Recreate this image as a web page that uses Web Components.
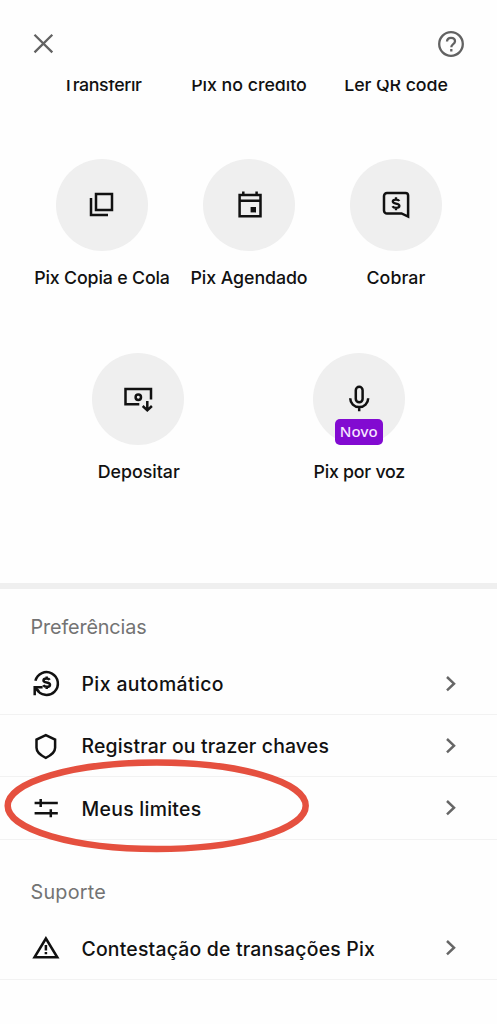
<!DOCTYPE html>
<html lang="pt-BR">
<head>
<meta charset="utf-8">
<meta name="viewport" content="width=device-width, initial-scale=1">
<title>Pix</title>
<style>
html,body{margin:0;padding:0;background:#fefefe}
body{font-family:Inter,"Liberation Sans",sans-serif;color:#111;height:1024px;overflow:hidden}
</style>
</head>
<body>
<pix-screen></pix-screen>
<script>
const ICONS = {
  copy: '<path d="M40 35h16v16H40z"/><path d="M35 39v17h17"/>',
  calendar: '<path d="M36.600 36h20.900v21.200H36.600z"/><path d="M36 41.800h22M40.300 32.600v3.400M53.600 32.600v3.400"/><path d="M47.600 48h5.400v5.400h-5.400z" fill="currentColor" stroke="none"/>',
  charge: '<path d="M37 34h18.500a2.600 2.600 0 0 1 2.600 2.600V57.600L51.500 54.400H37a3 3 0 0 1-3-3V37a3 3 0 0 1 3-3z"/><path d="M49.300 42c-.6-1-1.800-1.400-3.300-1.400-1.900 0-3.200.6-3.200 2 0 2.900 6.600 1.200 6.600 4.200 0 1.500-1.500 2.100-3.300 2.100-1.700 0-3-.6-3.600-1.700M46 38.200v2.400M46 48.800v2.400" stroke-width="2.300"/>',
  deposit: '<path d="M47.300 51.300H33.500V36.100H59v10.400"/><circle cx="46.300" cy="44.200" r="2.700"/><path d="M55.300 47.900v9M50.700 53l4.600 4.300 4.600-4.300"/>',
  mic: '<rect x="42.800" y="33.800" width="6.800" height="15.500" rx="3.400"/><path d="M37.200 45.300a9 8.800 0 0 0 18 0M46.200 54v4.200"/>',
  auto: '<path d="M3.400 11.800A11.400 11.400 0 1 1 4.600 20.200"/><path d="M10.600 18.300H2.700v8" /><path d="M3.600 19.200l3.300 3.300"/><path d="M17.700 10.800c-.6-1-1.700-1.300-3.100-1.300-1.900 0-3.100.6-3.100 1.900 0 3 6.500 1.200 6.500 4.300 0 1.500-1.500 2.100-3.200 2.100s-2.900-.6-3.500-1.700M14.700 7.500v2M14.700 17.800v2.100"/>',
  shield: '<path d="M13.800 3.200l9.300 4.400v8.200q0 5.800-9.300 10-9.300-4.200-9.300-10V7.600z"/>',
  sliders: '<path d="M2.600 9h23.200M2.600 19.300h23.200M8.700 5v8M18.800 15.300v8"/>',
  warning: '<path d="M13.900 4.500L25.300 23.300H2.500z"/><path d="M13.900 11v5.400M13.900 17.900v2.300"/>',
  close: '<path d="M2.500 2.800l17.800 17.600M20.300 2.800L2.500 20.400"/>',
  help: '<circle cx="14" cy="14" r="11.800"/><path d="M10 11.500c.1-2.300 1.700-3.600 4-3.600 2.400 0 4 1.400 4 3.400 0 2.900-3.700 2.700-3.700 5.900M14.300 19v2.500"/>',
  chevron: '<path d="M2 2l7 6.700L2 15.400"/>'
};

class PixIcon extends HTMLElement {
  connectedCallback() {
    const w = this.getAttribute('w'), h = this.getAttribute('h') || w;
    this.attachShadow({mode:'open'}).innerHTML = `
      <style>:host{display:block;flex:none}svg{display:block;fill:none;stroke:currentColor;stroke-width:${this.getAttribute('stroke') || 2.5}}</style>
      <svg width="${w}" height="${h}" viewBox="0 0 ${w} ${h}">${ICONS[this.getAttribute('name')]}</svg>`;
  }
}
customElements.define('pix-icon', PixIcon);

/* Text whose tracking is adjusted so that it sets to a given width. */
class FitText extends HTMLElement {
  connectedCallback() {
    this.attachShadow({mode:'open'}).innerHTML =
      '<style>:host{display:block;white-space:nowrap}span{display:inline-block}</style><span><slot></slot></span>';
    const span = this.shadowRoot.querySelector('span');
    const target = parseFloat(this.getAttribute('width'));
    const n = this.textContent.length;
    const gap = (target - span.getBoundingClientRect().width) / n;
    span.style.letterSpacing = gap.toFixed(3) + 'px';
  }
}
customElements.define('fit-text', FitText);

class PixAction extends HTMLElement {
  connectedCallback() {
    const badge = this.getAttribute('badge');
    this.attachShadow({mode:'open'}).innerHTML = `
      <style>
        :host{display:flex;flex-direction:column;align-items:center;flex:1 1 0;min-width:0}
        .disc{position:relative;width:92px;height:92px;border-radius:50%;background:#efefef;margin-bottom:15px}
        .badge{position:absolute;left:22px;top:66px;width:48px;height:26px;border-radius:5px;background:#820ad1;color:#f6e6ff;
          font:500 15px/24px "Noto Sans",sans-serif;display:flex;justify-content:center}
        fit-text{font-size:17.800px;line-height:24px;font-weight:540}
        .label{padding-left:1px}
      </style>
      ${this.hasAttribute('icon') ? `<div class="disc"><pix-icon name="${this.getAttribute('icon')}" w="92"></pix-icon>
        ${badge ? `<div class="badge"><fit-text style="font:inherit" width="38">${badge}</fit-text></div>` : ''}</div>` : ''}
      <fit-text class="label" width="${this.getAttribute('width')}">${this.getAttribute('label')}</fit-text>`;
  }
}
customElements.define('pix-action', PixAction);

class PixRow extends HTMLElement {
  connectedCallback() {
    this.attachShadow({mode:'open'}).innerHTML = `
      <style>
        :host{display:flex;align-items:center;box-sizing:border-box;height:62.400px;padding:0 41px 0 32px;border-bottom:1px solid #f2f2f2}
        fit-text{flex:1;margin-left:21.500px;font-size:19.400px;line-height:26px;font-weight:540;padding-top:1px}
        .go{color:#666}
      </style>
      <pix-icon name="${this.getAttribute('icon')}" w="28"></pix-icon>
      <fit-text width="${this.getAttribute('width')}">${this.getAttribute('label')}</fit-text>
      <pix-icon class="go" name="chevron" w="11" h="17.400" stroke="2.500"></pix-icon>`;
  }
}
customElements.define('pix-row', PixRow);

class PixSection extends HTMLElement {
  connectedCallback() {
    this.attachShadow({mode:'open'}).innerHTML = `
      <style>
        :host{display:block}
        fit-text{font-size:19.800px;line-height:28px;color:#737373;padding-left:30.500px;margin-bottom:11.300px}
      </style>
      <fit-text width="${this.getAttribute('width')}">${this.getAttribute('heading')}</fit-text><slot></slot>`;
  }
}
customElements.define('pix-section', PixSection);

class PixScreen extends HTMLElement {
  connectedCallback() {
    this.attachShadow({mode:'open'}).innerHTML = `
      <style>
        :host{display:flex;flex-direction:column;position:relative;width:497px;height:1024px;background:#fefefe}
        header{height:80px;box-sizing:border-box;flex:none;display:flex;justify-content:space-between;align-items:flex-start;padding:29.500px 32px 0;color:#626262}
        header pix-icon:first-child{margin-top:2.500px}
        main{flex:1;overflow:hidden;min-height:0;display:flow-root}
        .actions{display:flex;padding:0 28px}
        .a0{margin-top:-7.500px}.a1{margin-top:62.500px}.a2{margin-top:63px}
        .band{height:6px;background:#efefef;margin:99px 0 24.300px}
        .support{margin-top:38.400px}
        .ring{position:absolute;left:0;top:755px;pointer-events:none}
      </style>
      <header><pix-icon name="close" w="23" stroke="2.300"></pix-icon><pix-icon name="help" w="28" stroke="2.300"></pix-icon></header>
      <main>
        <div class="actions a0">
          <pix-action label="Transferir" width="79"></pix-action>
          <pix-action label="Pix no crédito" width="115.500"></pix-action>
          <pix-action label="Ler QR code" width="103.500"></pix-action>
        </div>
        <div class="actions a1">
          <pix-action icon="copy" label="Pix Copia e Cola" width="135.500"></pix-action>
          <pix-action icon="calendar" label="Pix Agendado" width="117"></pix-action>
          <pix-action icon="charge" label="Cobrar" width="59"></pix-action>
        </div>
        <div class="actions a2">
          <pix-action icon="deposit" label="Depositar" width="82"></pix-action>
          <pix-action icon="mic" badge="Novo" label="Pix por voz" width="91.500"></pix-action>
        </div>
        <div class="band"></div>
        <pix-section heading="Preferências" width="116">
          <pix-row icon="auto" label="Pix automático" width="142.500"></pix-row>
          <pix-row icon="shield" label="Registrar ou trazer chaves" width="247.500"></pix-row>
          <pix-row icon="sliders" label="Meus limites" width="120"></pix-row>
        </pix-section>
        <pix-section class="support" heading="Suporte" width="75.500">
          <pix-row icon="warning" label="Contestação de transações Pix" width="293.500"></pix-row>
        </pix-section>
      </main>
      <svg class="ring" width="314" height="102" viewBox="0 0 314 102"><ellipse cx="156.700" cy="50.700" rx="149" ry="43.300" fill="none" stroke="#e5503f" stroke-width="6.500"/></svg>`;
  }
}
customElements.define('pix-screen', PixScreen);
</script>
</body>
</html>
